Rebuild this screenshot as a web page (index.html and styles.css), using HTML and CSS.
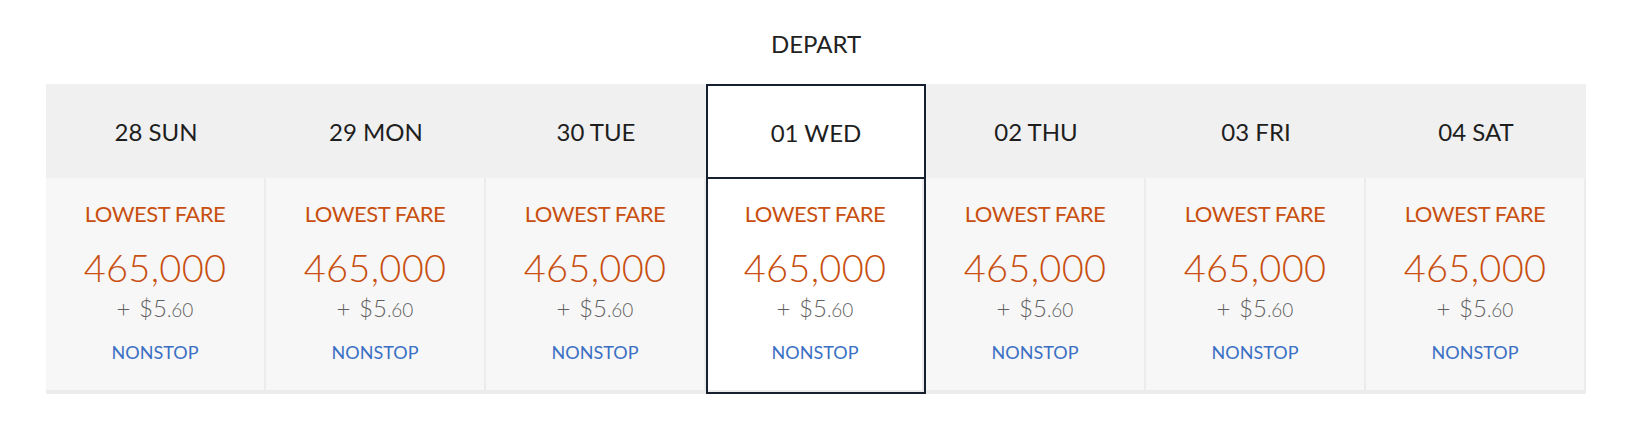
FILE: index.html
```html
<!DOCTYPE html>
<html>
<head>
<meta charset="utf-8">
<link rel="stylesheet" href="styles.css">
</head>
<body>
<div class="page">
  <h2 class="title">DEPART</h2>
  <div class="grid">
    <div class="col"><div class="day">28 SUN</div><div class="fare"><div class="label">LOWEST FARE</div><div class="price">465,000</div><div class="fee">+ $5<span class="cents">.60</span></div><div class="stops">NONSTOP</div></div></div>
    <div class="col"><div class="day">29 MON</div><div class="fare"><div class="label">LOWEST FARE</div><div class="price">465,000</div><div class="fee">+ $5<span class="cents">.60</span></div><div class="stops">NONSTOP</div></div></div>
    <div class="col"><div class="day">30 TUE</div><div class="fare"><div class="label">LOWEST FARE</div><div class="price">465,000</div><div class="fee">+ $5<span class="cents">.60</span></div><div class="stops">NONSTOP</div></div></div>
    <div class="col selected"><div class="day">01 WED</div><div class="fare"><div class="label">LOWEST FARE</div><div class="price">465,000</div><div class="fee">+ $5<span class="cents">.60</span></div><div class="stops">NONSTOP</div></div></div>
    <div class="col"><div class="day">02 THU</div><div class="fare"><div class="label">LOWEST FARE</div><div class="price">465,000</div><div class="fee">+ $5<span class="cents">.60</span></div><div class="stops">NONSTOP</div></div></div>
    <div class="col"><div class="day">03 FRI</div><div class="fare"><div class="label">LOWEST FARE</div><div class="price">465,000</div><div class="fee">+ $5<span class="cents">.60</span></div><div class="stops">NONSTOP</div></div></div>
    <div class="col"><div class="day">04 SAT</div><div class="fare"><div class="label">LOWEST FARE</div><div class="price">465,000</div><div class="fee">+ $5<span class="cents">.60</span></div><div class="stops">NONSTOP</div></div></div>
  </div>
</div>
</body>
</html>
```
FILE: styles.css
```css
html, body {
  margin: 0;
  padding: 0;
  background: #ffffff;
}
.page {
  font-family: Lato, "Open Sans", sans-serif;
  padding: 0 58px 0 46px;
}
.title {
  margin: 0;
  height: 84px;
  display: flex;
  align-items: center;
  justify-content: center;
  font-size: 24px;
  font-weight: 400;
  color: #222222;
  padding-top: 2px;
  box-sizing: border-box;
}
.grid {
  display: grid;
  grid-template-columns: repeat(7, 220px);
  width: 1540px;
}
.col {
  display: flex;
  flex-direction: column;
  height: 310px;
  box-sizing: border-box;
}
.day {
  height: 94px;
  background: #f0f0f0;
  display: flex;
  align-items: center;
  justify-content: center;
  font-size: 24px;
  color: #1e1e1e;
  box-sizing: border-box;
  padding-top: 1px;
}
.fare {
  flex: 1;
  background: #f7f7f7;
  border-right: 2px solid #ececec;
  border-bottom: 4px solid #ececec;
  display: flex;
  flex-direction: column;
  align-items: center;
  padding-top: 22px;
  box-sizing: border-box;
}
.label {
  font-size: 22px;
  line-height: 28px;
  color: #c84f10;
  letter-spacing: -0.5px;
}
.price {
  font-size: 38px;
  font-weight: 300;
  line-height: 44px;
  color: #c84f10;
  margin-top: 17px;
  letter-spacing: 0.3px;
}
.fee {
  font-size: 24px;
  font-weight: 300;
  line-height: 24px;
  color: #5e5e5e;
  margin-top: 7px;
  word-spacing: 2px;
}
.cents {
  font-size: 19px;
}
.stops {
  font-size: 18px;
  line-height: 22px;
  color: #3a6fc4;
  margin-top: 19px;
}
.selected {
  border: 2px solid #17202e;
}
.selected .day {
  background: #ffffff;
  height: 93px;
  border-bottom: 2px solid #17202e;
}
.selected .fare {
  background: #ffffff;
  border-bottom: 2px solid #ececec;
  padding-top: 21px;
}
```
